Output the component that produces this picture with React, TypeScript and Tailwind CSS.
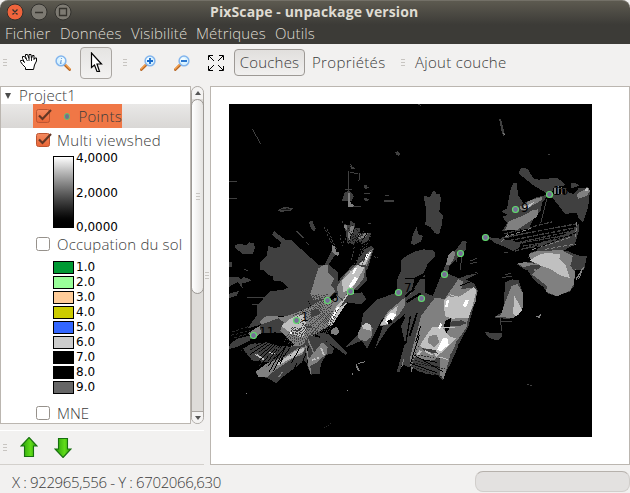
import React from "react";

type Ray = [number, number, number, number, number?];

const G1 = "#404040";
const G2 = "#808080";
const G3 = "#c0c0c0";

function P({ c, d }: { c: string; d: string }) {
  return <polygon fill={c} points={d} />;
}

function Rays({ c, w = 3, list, dash }: { c: string; w?: number; list: Ray[]; dash?: string }) {
  return (
    <g stroke={c} fill="none" strokeDasharray={dash}>
      {list.map(([a, b, x, y, t], i) => (
        <line key={i} x1={a} y1={b} x2={x} y2={y} strokeWidth={t ?? w} />
      ))}
    </g>
  );
}

function fan(x: number, y: number, r1: number, r2: number, from: number, to: number, n: number): Ray[] {
  return Array.from({ length: n }, (_, i) => {
    const a = ((from + ((to - from) * i) / (n - 1)) * Math.PI) / 180;
    const far = r2 * (0.78 + 0.22 * Math.abs(Math.sin(i * 2.3)));
    const near = r1 * (0.8 + 0.4 * Math.abs(Math.cos(i * 1.7)));
    return [x + Math.cos(a) * near, y + Math.sin(a) * near, x + Math.cos(a) * far, y + Math.sin(a) * far];
  });
}

const sites: [number, number][] = [
  [549.5, 194.5], [515.5, 209.5], [485.5, 237.5], [460.5, 253.5], [444.5, 274.5], [421.5, 298.5],
  [398.5, 292.5], [350.5, 291.5], [327.5, 300.5], [296.5, 320.5], [253.5, 335.5],
];

const siteLabels: [string, number, number][] = [
  ["10", 553, 195], ["9", 521, 212], ["8", 450, 275], ["7", 404, 292], ["6", 331, 302], ["1", 301, 321], ["11", 259, 336],
];

function NorthWest() {
  return (
    <g transform="translate(225 100) scale(.33333)">
      <Rays c={G1} list={[[82, 88, 107, 131], [12, 244, 36, 244], [12, 295, 36, 295], [480, 286, 491, 286], [477, 302, 506, 304, 5], [376, 192, 381, 202], [374, 217, 398, 221], [403, 220, 402, 242], [430, 370, 438, 370], [417, 280, 436, 280]]} />
      <P c={G1} d="510,156 519,154 525,160 522,168 514,164" />
      <P c={G1} d="376,197 386,202 395,208 378,208" />
      <P c={G1} d="417,255 425,255 427,261 435,261 422,268 417,264" />
      <P c={G1} d="417,294 432,297 430,303 417,301" />
      <P c={G1} d="158,332 172,323 184,321 203,325 197,332 178,333 172,337" />
      <Rays c="#000" w={2} list={[[168, 330, 190, 327], [182, 324, 194, 330]]} />
      <P c={G1} d="358,280 370,270 380,278 386,290 380,304 350,304" />
      <Rays c={G1} list={[[372, 214, 372, 275], [361, 269, 381, 269], [372, 319, 407, 319]]} />
      <P c={G2} d="370,280 375,280 377,312 388,315 384,320 369,322" />
      <P c={G1} d="251,365 262,363 272,385 267,396 257,384" />
      <Rays c={G1} list={[[213, 393, 236, 414, 4], [242, 425, 251, 434]]} />
      <P c={G1} d="105,510 105,488 125,469 130,438 147,443 163,442 168,427 140,404 148,394 180,419 199,421 295,507 292,512" />
      <P c={G1} d="30,435 43,431 64,436 71,427 86,430 90,442 84,462 54,462 30,444" />
      <P c={G1} d="12,486 20,486 20,501 12,501" />
      <P c={G1} d="293,505 320,452 330,465 301,510" />
      <Rays c={G1} dash="7 5" list={[[297, 380, 329, 451], [305, 386, 336, 449], [351, 363, 368, 400], [388, 440, 379, 480], [369, 404, 353, 430]]} />
      <P c={G2} d="322,436 329,439 335,456 345,458 338,468 330,463 320,452" />
      <P c={G1} d="357,372 373,376 377,362 389,370 391,382 404,385 408,402 438,400 430,420 410,434 400,420 387,435 374,428 367,434 364,405" />
      <P c={G2} d="358,374 366,377 365,390 358,384" />
      <P c={G2} d="369,400 377,380 386,378 385,397 374,421 368,410" />
      <P c={G2} d="399,403 430,398 425,409 401,418" />
      <P c={G1} d="423,445 438,438 447,447 439,470 427,510 385,510 398,480" />
      <P c={G2} d="430,455 444,446 432,480 420,510 391,510 402,488 416,482" />
      <Rays c={G3} list={[[435, 458, 412, 503, 6], [414, 485, 395, 510, 6]]} />
      <P c="#fff" d="425,462 441,454 429,469 425,481 420,477" />
      <Rays c={G1} w={3} dash="4 6" list={[[398, 478, 428, 426], [388, 492, 418, 440], [434, 420, 412, 462], [396, 430, 420, 388], [404, 450, 440, 405], [448, 470, 458, 474], [345, 405, 352, 440]]} />
      <Rays c="#000" w={2} dash="4 3" list={[[400, 510, 438, 450], [394, 501, 424, 464], [378, 392, 406, 428], [382, 376, 421, 414], [369, 384, 389, 431], [376, 424, 438, 389], [383, 411, 415, 389]]} />
      <Rays c="#000" w={3} dash="8 3" list={[[366, 436, 394, 374], [390, 430, 412, 384], [402, 438, 428, 396]]} />
      <P c={G1} d="528,497 540,478 570,464 570,512 530,512" />
      <P c={G1} d="558,431 568,405 583,405 570,436" />
    </g>
  );
}

function NorthEast() {
  return (
    <g transform="translate(405 100) scale(.33333)">
      <Rays c={G1} list={[[38, 13, 48, 16], [429, 163, 434, 163], [297, 458, 310, 458]]} />
      <P c={G1} d="282,56 288,58 300,104 294,108 289,91" />
      <Rays c={G2} list={[[293, 97, 301, 105]]} />
      <P c={G1} d="56,289 75,290 87,269 94,281 104,281 108,296 103,335 113,347 112,370 102,404 90,400 76,381 61,374 64,332" />
      <P c={G1} d="18,430 23,405 35,381 39,402 54,408 47,426 29,434" />
      <P c={G1} d="-12,480 10,464 31,454 55,448 88,452 90,470 67,492 55,510 -12,510" />
      <P c={G1} d="340,220 350,202 370,208 384,235 400,239 426,236 457,234 480,252 481,267 493,278 505,282 522,264 549,262 555,272 551,310 546,333 534,368 520,354 515,338 480,342 465,322 448,300 422,278 388,258 354,231" />
      <P c={G1} d="497,248 512,249 522,257 498,266" />
      <P c={G1} d="289,335 306,325 317,267 326,249 336,250 339,285 355,310 395,292 433,283 411,307 408,330 388,352 371,386 322,391 292,392 307,369 291,350 308,345" />
      <P c={G2} d="344,321 374,302 412,290 409,301 380,318 362,329 348,329" />
      <P c={G3} d="357,320 387,306 395,301 374,322 360,329" />
      <P c={G2} d="301,389 311,364 352,348 384,330 400,328 397,349 367,369 336,390 311,391" />
      <P c={G2} d="515,282 537,270 551,263 555,274 546,287 519,297" />
      <P c={G3} d="539,267 549,263 550,271 542,275" />
      <P c="#000" d="446,262 481,256 481,283 440,283" />
      <Rays c={G2} w={5} list={[[451, 265, 450, 283], [460, 259, 460, 283], [470, 262, 471, 283]]} />
      <Rays c={G1} w={3} list={[[426, 296, 407, 369], [440, 262, 486, 266]]} />
      <P c={G1} d="247,411 285,416 319,422 348,429 343,443 325,453 299,440 271,430" />
      <P c={G1} d="407,427 469,408 508,388 521,371 522,390 510,432 475,453 414,464 369,473 394,454" />
      <Rays c={G1} w={4} dash="14 4" list={[[292, 413, 517, 371], [296, 425, 519, 382], [320, 432, 516, 390], [350, 429, 514, 400], [355, 438, 510, 413], [360, 445, 508, 421], [296, 402, 440, 366], [289, 415, 377, 397], [330, 453, 500, 408], [378, 458, 511, 434]]} />
      <Rays c={G2} w={3} dash="12 6" list={[[300, 411, 379, 385], [381, 449, 500, 411], [420, 448, 512, 432], [516, 365, 511, 412], [290, 425, 315, 395]]} />
      <Rays c="#000" w={3} dash="10 4" list={[[400, 443, 512, 398], [410, 424, 508, 404], [300, 418, 400, 396]]} />
      <P c={G1} d="385,458 414,462 449,452 487,452 517,466 546,469 537,510 362,510 336,493 380,484" />
      <P c={G2} d="371,462 394,454 470,450 503,468 498,493 515,510 412,510 376,478" />
      <P c={G3} d="374,482 400,465 422,459 466,462 463,478 481,494 484,511 429,511 408,496" />
      <P c={G2} d="337,489 362,487 395,492 382,499 353,501" />
      <P c={G1} d="174,421 185,425 182,450 164,467 147,486 122,510 122,490 138,462 154,448" />
      <P c={G2} d="122,500 129,468 140,454 152,455 145,480 121,511" />
      <Rays c={G1} list={[[171, 468, 165, 510], [157, 464, 154, 487], [195, 483, 217, 475], [194, 490, 217, 488]]} />
    </g>
  );
}

function SouthWest() {
  return (
    <g transform="translate(225 265) scale(.33333)">
      <P c={G1} d="104,0 291,0 313,0 339,22 340,55 334,84 294,113 258,120 248,104 204,98 148,112 130,128 97,144 97,121 113,103 139,77 174,76 190,67 170,50 145,46 144,35 127,28" />
      <P c={G1} d="13,37 40,36 47,43 55,36 80,45 70,51 52,55 50,68 39,51 13,65" />
      <P c={G1} d="12,86 42,78 35,92 12,99" />
      <Rays c={G1} list={[[67, 98, 168, 98], [82, 120, 160, 120], [57, 12, 69, 18], [45, 51, 52, 68]]} />
      <P c={G1} d="97,121 148,106 204,98 248,104 256,124 222,140 186,153 150,152 128,158 105,180 68,190 96,150" />
      <P c={G1} d="14,238 36,221 85,209 75,226 38,245 13,252" />
      <P c={G2} d="67,206 88,192 109,180 105,170 120,155 147,152 168,157 185,153 219,141 250,128 283,107 317,105 335,96 355,83 366,90 341,130 325,174 287,198 251,220 234,246 200,250 194,231 167,201 133,205 101,220" />
      <P c={G1} d="105,180 160,160 176,172 166,196 172,206 108,206" />
      <P c={G2} d="256,87 269,45 281,9 297,0 310,0 309,22 328,42 318,60 332,79 307,101 266,105" />
      <P c={G3} d="168,183 194,163 216,151 237,151 243,165 244,197 232,218 202,207" />
      <P c={G3} d="307,177 334,125 356,101 370,80 390,84 360,122 336,157 320,184" />
      <P c={G1} d="334,54 361,25 382,0 423,0 425,48 399,74 374,75 353,107 332,90" />
      <P c={G2} d="337,63 364,24 393,0 422,8 415,43 389,72 367,82 355,104 338,92" />
      <P c={G3} d="350,49 375,21 397,0 418,8 400,40 382,70 356,82" />
      <P c="#fff" d="372,62 389,36 399,39 390,56 376,70" />
      <Rays c="#fff" w={6} list={[[384, 27, 392, 9], [340, 126, 321, 164]]} />
      <P c={G1} d="370,88 410,82 424,101 408,118 366,112 344,128" />
      <P c={G1} d="257,137 280,130 287,147 259,158" />
      <P c="#000" d="108,205 172,205 208,239 196,245 140,235 107,222 80,225" />
      <P c={G1} d="54,251 80,236 127,232 161,243 198,245 233,241 253,211 293,220 328,250 322,266 303,270 287,299 285,326 258,329 247,302 238,286 208,310 177,333 154,354 125,339 91,326 137,293 81,286" />
      <P c={G2} d="92,320 127,294 180,275 218,250 244,244 233,267 200,283 153,314 127,335 100,335" />
      <P c={G3} d="151,299 209,259 238,248 237,258 206,277 163,299" />
      <P c={G2} d="247,286 277,250 291,232 308,245 305,267 274,293 249,306" />
      <Rays c={G3} w={5} list={[[288, 249, 297, 270], [283, 278, 261, 285], [133, 262, 148, 268], [91, 267, 116, 283]]} />
      <P c={G2} d="318,197 333,184 344,198 336,209 320,208" />
      <P c={G1} d="277,201 310,207 368,263 363,270 314,236 280,212" />
      <Rays c={G1} w={3} dash="5 3" list={fan(372, 77, 75, 186, 117, 172, 25)} />
      <Rays c={G1} w={3} dash="5 3" list={fan(214, 166, 24, 80, 22, 120, 17)} />
      <Rays c="#000" w={3} list={fan(307, 106, 175, 240, 108, 140, 9)} />
      <Rays c="#000" w={3} list={fan(215, 176, 84, 168, 112, 158, 13)} />
      <Rays c={G1} w={2} dash="9 5" list={[[20, 201, 68, 185], [18, 211, 74, 196], [28, 218, 80, 203], [168, 248, 124, 307], [154, 245, 102, 302], [137, 242, 77, 278], [118, 238, 60, 262], [104, 237, 48, 256], [372, 88, 420, 108], [370, 96, 412, 112]]} />
      <Rays c={G2} w={4} list={[[242, 239, 258, 328], [249, 224, 278, 291], [172, 322, 160, 337]]} />
      <P c={G1} d="535,0 585,0 570,35 560,76 533,122 502,135 469,165 426,251 410,227 358,249 402,206 415,145 456,104 516,82 516,45" />
      <P c={G1} d="540,74 568,70 585,43 600,28 600,96 558,107 536,151 491,187 449,252 476,178" />
      <P c={G2} d="399,203 414,179 428,175 443,188 439,216 423,229 401,222" />
      <P c={G3} d="411,182 425,173 439,181 437,197 416,192" />
      <P c={G2} d="463,184 488,140 532,104 560,77 554,99 526,143 495,177" />
      <P c={G3} d="466,180 490,144 519,121 513,145 488,178" />
      <P c="#fff" d="480,171 489,150 501,142 515,150 501,166 488,178" />
      <P c="#000" d="486,168 498,161 503,171 491,179" />
      <P c={G1} d="516,319 540,234 526,175 553,121 600,105 600,245 588,322 570,281 552,307 530,297 524,322" />
      <Rays c="#000" w={4} list={[[480, 238, 575, 111], [537, 157, 504, 235], [558, 172, 546, 252]]} />
      <Rays c={G2} w={3} list={[[562, 205, 530, 305], [571, 210, 550, 291], [393, 298, 402, 318, 5], [400, 295, 421, 290], [382, 323, 382, 331], [367, 378, 369, 378], [64, 385, 66, 385]]} />
      <Rays c={G1} w={2} dash="3 5" list={[[290, 495, 318, 475]]} />
      <rect x="196" y="202" width="5" height="5" fill="#fff" />
    </g>
  );
}

function SouthEast() {
  return (
    <g transform="translate(405 265) scale(.33333)">
      <P c={G1} d="0,0 68,0 54,26 17,43 0,61" />
      <P c={G1} d="121,0 132,0 130,20 112,43 80,102 22,269 11,305 -2,297 0,92 46,78 89,95" />
      <P c={G1} d="113,20 162,40 205,23 228,21 183,44 207,55 219,77 190,184 154,250 138,294 119,327 113,344 97,330 45,321 15,303 16,255 43,171 80,101" />
      <P c={G2} d="49,151 90,98 119,102 160,42 176,51 169,72 207,68 216,78 212,109 190,156 184,188 156,228 134,278 116,343 105,330 105,275 73,295 34,279 18,325 15,280 23,247 33,211" />
      <P c={G3} d="120,154 116,109 131,94 158,97 181,84 205,67 214,75 206,111 191,158 144,161" />
      <P c={G3} d="45,241 66,208 82,187 111,187 134,215 154,220 122,252 93,277 83,256 53,248" />
      <P c={G2} d="69,232 71,214 94,208 103,230 88,247" />
      <P c="#fff" d="96,256 114,219 129,221 131,240 109,257" />
      <Rays c="#fff" w={7} list={[[188, 103, 178, 125, 10], [129, 105, 124, 126], [109, 176, 102, 190]]} />
      <P c="#000" d="119,169 137,160 136,184 124,205 118,187" />
      <P c={G1} d="136,170 169,166 185,174 163,184 136,183" />
      <P c={G1} d="52,250 92,255 98,266 60,259" />
      <P c={G1} d="156,222 158,248 138,294 134,272 150,246" />
      <P c={G1} d="30,276 70,288 106,282 106,332 60,326 18,304" />
      <Rays c="#000" w={3} list={[[164, 63, 205, 47], [176, 31, 228, 22], [28, 71, 0, 95, 6], [5, 111, 47, 85, 7], [0, 41, 75, 38, 4], [36, 145, 14, 212, 5], [16, 153, 2, 237, 4], [47, 182, 32, 232], [25, 269, 114, 320], [19, 296, 95, 323], [53, 284, 96, 292], [43, 211, 16, 297]]} />
      <Rays c={G3} w={3} list={[[136, 89, 167, 99], [119, 104, 204, 103], [109, 187, 149, 188], [60, 257, 82, 270, 5], [103, 276, 130, 284], [47, 257, 39, 270, 8]]} />
      <Rays c="#000" w={2} dash="5 4" list={[[31, 287, 119, 312], [20, 305, 110, 335], [25, 295, 98, 306], [39, 270, 110, 282], [13, 315, 40, 242]]} />
      <P c={G1} d="299,53 321,43 341,46 353,82 354,118 333,149 312,163 266,157 291,142 298,113" />
      <P c={G2} d="320,63 337,57 354,84 355,126 339,151 313,160 286,153 300,112" />
      <P c={G3} d="328,91 351,135 335,154 324,147" />
      <Rays c={G2} w={4} list={[[273, 155, 327, 156]]} />
      <Rays c={G1} list={[[287, 160, 289, 197], [286, 171, 321, 170], [291, 38, 322, 33], [301, 28, 318, 26]]} />
      <P c={G1} d="240,202 291,204 292,214 280,227 267,224 250,217" />
      <P c={G1} d="360,5 380,0 511,0 511,22 506,64 494,80 452,94 429,85 416,67 389,47" />
      <P c={G2} d="381,29 412,0 494,0 511,22 506,58 495,77 455,94 424,80 425,63 398,41" />
      <P c={G3} d="401,0 481,0 495,39 465,31 434,11" />
      <Rays c={G2} list={[[536, 7, 513, 43, 4], [531, 18, 521, 41], [388, 14, 397, 17, 5], [400, 160, 407, 148, 4], [394, 155, 401, 153]]} />
      <Rays c={G1} list={[[365, 358, 372, 358], [374, 361, 381, 361]]} />
    </g>
  );
}

function ViewshedMap() {
  return (
    <svg className="block h-[333px] w-[363px] bg-black" viewBox="229 104 363 333">
      <g shapeRendering="crispEdges">
        <NorthWest />
        <NorthEast />
        <SouthWest />
        <SouthEast />
      </g>
      <g fontFamily="DejaVu Sans" fontSize="12" fontWeight="400" fill="#000">
        {siteLabels.map(([t, x, y]) => (
          <text key={t} x={x} y={y}>{t}</text>
        ))}
      </g>
      {sites.map(([x, y], i) => (
        <circle key={i} cx={x} cy={y} r="3" fill="#776d98" stroke="#60db6b" strokeWidth="1.2" />
      ))}
    </svg>
  );
}

function Grip() {
  return (
    <div className="flex w-1 shrink-0 flex-col gap-[2px]">
      <i className="h-px bg-[#c8c5c1]" />
      <i className="h-px bg-[#c8c5c1]" />
      <i className="h-px bg-[#c8c5c1]" />
    </div>
  );
}

function Magnifier({ kind }: { kind: "info" | "plus" | "minus" }) {
  return (
    <svg className="block size-4 shrink-0" viewBox="0 0 16 16">
      <g transform={kind === "info" ? "matrix(-1 0 0 1 16 0)" : undefined}>
        <path d="M1.3 14.7 6.500 9.500" stroke="#b76725" strokeWidth="2.6" strokeLinecap="round" />
        <path d="M1 14 6 9" stroke="#f5a04c" strokeWidth="1.4" strokeLinecap="round" />
        <circle cx="10" cy="5.9" r="4.9" fill="#d9f2ff" stroke="#83b5ed" strokeWidth="1.5" />
        <circle cx="9" cy="5" r="2.5" fill="#f2fcff" />
      </g>
      {kind === "info" ? (
        <path d="M6.500 3v1M6.300 5 5.500 8.500h1" fill="none" stroke="#72a6df" strokeWidth="1.2" />
      ) : (
        <path d={kind === "plus" ? "M7 6h6M10 3v6" : "M7 6h6"} stroke="#1769cb" strokeWidth="1.8" />
      )}
    </svg>
  );
}

function Hand() {
  return (
    <svg className="block h-[17px] w-[17px]" viewBox="0 0 17 17">
      <path
        d="M5.500 15.500v-2l-3-3-2-3v-1h2l2 2-2-4v-2h2l2 3-1-3v-2h2l1.500 4V.5h2l.5 4 1-3h1.500v4l1-1.500h1.500v3l-2 4-1 4.500z"
        fill="#fff" stroke="#000" strokeWidth="1" strokeLinejoin="bevel"
      />
      <path d="M6.500 5.500 7.500 7M9 4.500V7M11.500 4.500V7" stroke="#000" strokeWidth=".9" fill="none" />
    </svg>
  );
}

function Cursor() {
  return (
    <svg className="block h-[21px] w-[13px]" viewBox="0 0 13 21">
      <path d="M1.500 1v14.500L4.500 13l2.500 6.500h2.500L7 12h4.500z" fill="#fff" stroke="#000" strokeWidth="1.2" />
    </svg>
  );
}

function ZoomAll() {
  return (
    <svg className="block size-4" viewBox="0 0 16 16" fill="none" stroke="#000" strokeWidth="1">
      <path d="M.5 5V.5H5M11 .5h4.500V5M15.500 11v4.500H11M5 15.500H.5V11M1 1l5 5M15 1l-5 5M15 15l-5-5M1 15l5-5" />
    </svg>
  );
}

function Check({ on }: { on?: boolean }) {
  return (
    <svg className="block size-4 shrink-0" viewBox="0 0 16 16">
      <defs>
        <linearGradient id="tick" x2="0" y2="1">
          <stop stopColor="#f58b60" />
          <stop offset="1" stopColor="#e96535" />
        </linearGradient>
      </defs>
      <rect x=".5" y="1.500" width="13" height="13" rx="2" fill={on ? "url(#tick)" : "#fff"} stroke={on ? "#bd5531" : "#96918b"} />
      {on && <path d="M3 7.500 6.500 11 15 2" fill="none" stroke="#633725" strokeWidth="2.200" />}
    </svg>
  );
}

function Arrow({ down }: { down?: boolean }) {
  return (
    <svg className="block h-[21px] w-[18px]" viewBox="0 0 18 21">
      <defs>
        <linearGradient id="leaf">
          <stop stopColor="#259b0a" />
          <stop offset=".6" stopColor="#60dc19" />
          <stop offset="1" stopColor="#319f08" />
        </linearGradient>
      </defs>
      <path
        d={down ? "M9 20.500 17 12h-3.500V1.500h-9V12H1z" : "M9 .5 17 9h-3.500v10.500h-9V9H1z"}
        fill="url(#leaf)" stroke="#17700f" strokeWidth="1.100"
      />
    </svg>
  );
}

const legend = [
  ["1.0", "bg-[#009933]"], ["2.0", "bg-[#99ff99]"], ["3.0", "bg-[#ffcc99]"],
  ["4.0", "bg-[#cccc00]"], ["5.0", "bg-[#3366ff]"], ["6.0", "bg-[#cccccc]"],
  ["7.0", "bg-black"], ["8.0", "bg-black"], ["9.0", "bg-[#666666]"],
];

function TitleBar() {
  return (
    <div className="flex h-6 items-center pl-[7px]">
      <svg className="-mt-[2px] block h-[18px] w-[66px] shrink-0" viewBox="0 0 66 18">
        <g stroke="#32312d">
          <circle cx="8" cy="9" r="8" fill="#ef643c" />
          <circle cx="32" cy="9" r="8" fill="#7d7a72" />
          <circle cx="56" cy="9" r="8" fill="#7d7a72" />
        </g>
        <path d="m5.500 6.500 5 5m0-5-5 5M28 9.500h8M52.500 5.500h7v7h-7z" fill="none" stroke="#35332d" strokeWidth="1.300" />
      </svg>
      <h1 className="-mt-[2px] ml-[137px] font-['Open_Sans',sans-serif] text-[14px] leading-5 font-bold tracking-[0.12px] whitespace-nowrap text-[#dfdbd2]">
        PixScape - unpackage version
      </h1>
    </div>
  );
}

function LayerTree() {
  return (
    <div className="h-[338px] w-[191px] overflow-hidden border border-[#bbb6b0] bg-white">
      <div className="flex h-[17px] items-center pl-[3px]">
        <svg className="size-2" viewBox="0 0 8 8"><path d="M1 1h6L4 7z" fill="#4c4c4c" /></svg>
        <span className="-mt-[2px] ml-[7px] tracking-[0.15px]">Project1</span>
      </div>
      <div className="flex h-6 bg-linear-to-b from-[#e9e8e7] to-[#d9d7d5] pl-8">
        <div className="flex h-6 w-[89px] items-center bg-[#f07746] pl-[3px]">
          <Check on />
          <i className="ml-3 size-[7px] rounded-full border border-[#65c46c] bg-[#74718d]" />
          <span className="ml-[8px] tracking-[0.3px]">Points</span>
        </div>
      </div>
      <div className="flex h-6 items-center pl-[35px]">
        <Check on />
        <span className="ml-[5px] tracking-[0.3px]">Multi viewshed</span>
      </div>
      <div className="flex h-20 pt-1 pl-[52px] font-['DejaVu_Sans',sans-serif] text-[12px] leading-3 font-normal text-black">
        <div className="h-[72px] w-[21px] border border-black bg-linear-to-b from-white to-black" />
        <div className="-mt-[4px] ml-[2px] flex h-[81px] flex-col justify-between">
          <span>4,0000</span><span>2,0000</span><span>0,0000</span>
        </div>
      </div>
      <div className="flex h-6 items-center pl-[35px]">
        <Check />
        <span className="ml-[5px] tracking-[0.18px]">Occupation du sol</span>
      </div>
      <div className="flex h-[145px] flex-col gap-[2px] pt-[5px] pl-[52px]">
        {legend.map(([name, fill]) => (
          <div key={name} className="flex h-[13px] shrink-0 items-center">
            <i className={"h-[13px] w-[21px] border border-black " + fill} />
            <span className="-mt-px ml-[2px] font-['DejaVu_Sans',sans-serif] text-[12px] leading-3 font-normal text-black">{name}</span>
          </div>
        ))}
      </div>
      <div className="flex h-6 items-center pl-[35px]">
        <Check />
        <span className="ml-[5px]">MNE</span>
      </div>
    </div>
  );
}

function ScrollBar() {
  return (
    <div className="flex h-[338px] w-[13px] flex-col rounded-full border border-[#aaa6a1] bg-[#dedcd9]">
      <div className="flex h-3 items-center justify-center rounded-t-full bg-[#f4f3f2]">
        <svg className="h-1 w-[6px]" viewBox="0 0 6 4"><path d="M0 4 3 0l3 4z" fill="#555" /></svg>
      </div>
      <div className="-mx-px flex h-[195px] items-center justify-center rounded-full border border-[#9c9894] bg-linear-to-r from-white to-[#e5e3e1]"><Grip /></div>
      <div className="mt-auto flex h-3 items-center justify-center rounded-b-full border-t border-[#aaa6a1] bg-[#f4f3f2]">
        <svg className="h-1 w-[6px]" viewBox="0 0 6 4"><path d="m0 0 3 4 3-4z" fill="#555" /></svg>
      </div>
    </div>
  );
}

export default function App() {
  return (
    <div className="h-[493px] w-[630px] overflow-hidden bg-[#f2f1f0] font-['Open_Sans',sans-serif] text-[15px] leading-5 font-light whitespace-nowrap text-[#3c3c3c]">
      <header className="h-11 rounded-t-lg border-t border-[#737067] bg-linear-to-b from-[#5d5a50] to-[#3c3b37] to-55%">
        <TitleBar />
        <nav className="-mt-[2px] flex h-5 items-center pl-[5px] tracking-[0.15px] text-[#dfdbd2]">
          <span className="w-[55px]">Fichier</span>
          <span className="w-[71px]">Données</span>
          <span className="w-[65px]">Visibilité</span>
          <span className="w-[79px]">Métriques</span>
          <span>Outils</span>
        </nav>
      </header>
      <div className="flex h-[42px] items-center pb-[5px] pl-[3px]">
        <Grip />
        <div className="ml-[13px]"><Hand /></div>
        <div className="ml-[18px]"><Magnifier kind="info" /></div>
        <div className="ml-[9px] flex h-8 w-8 items-center justify-center rounded border border-[#aaa6a2] bg-linear-to-b from-[#e5e4e2] to-[#f3f2f1]"><Cursor /></div>
        <div className="ml-[11px]"><Grip /></div>
        <div className="ml-[13px]"><Magnifier kind="plus" /></div>
        <div className="ml-[18px]"><Magnifier kind="minus" /></div>
        <div className="ml-[18px]"><ZoomAll /></div>
        <div className="ml-[10px] flex h-[27px] w-[71px] items-center justify-center rounded border border-[#9d9995] bg-linear-to-b from-[#e1dfdd] to-[#f1f0ef] pb-[2px] tracking-[0.2px]">Couches</div>
        <span className="-mt-[2px] ml-[7px] w-[89px] tracking-[0.35px]">Propriétés</span>
        <Grip />
        <span className="-mt-[2px] ml-[10px] tracking-[0.3px]">Ajout couche</span>
      </div>
      <main className="flex h-[379px]">
        <div className="w-[204px]">
          <div className="flex"><LayerTree /><ScrollBar /></div>
          <div className="mt-[6px] flex h-[35px] items-center border-t border-b border-t-white border-b-[#d3d0cc] pl-[3px]">
            <Grip />
            <div className="ml-[13px]"><Arrow /></div>
            <div className="ml-4"><Arrow down /></div>
          </div>
        </div>
        <div className="flex w-[6px] items-center justify-center"><Grip /></div>
        <section className="h-[379px] w-[420px] border border-[#bbb6b0] bg-white pt-[17px] pl-[18px]"><ViewshedMap /></section>
      </main>
      <footer className="flex h-7 items-start justify-between pl-3">
        <span className="pt-[7px] tracking-[-0.36px]">X : 922965,556 - Y : 6702066,630</span>
        <div className="mt-[6px] h-[21px] w-[155px] rounded-[8px] border border-[#d1cecb] border-t-[#b6b1ac] bg-[#e3e1e0]" />
      </footer>
    </div>
  );
}
